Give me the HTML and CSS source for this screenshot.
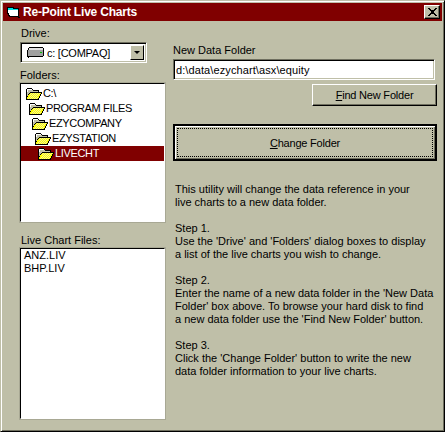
FILE: index.html
```html
<!DOCTYPE html>
<html lang="en">
<head>
    <meta charset="UTF-8">
    <meta name="viewport" content="width=device-width, initial-scale=1.0">
    <title>Re-Point Live Charts</title>
    <link rel="stylesheet" href="styles.css">
</head>
<body>
    <svg class="defs" width="0" height="0">
        <symbol id="folder" viewBox="0 0 17 14" shape-rendering="crispEdges">
            <path d="M2 1h5v1h1v1h6v2h3v2h-1v2h-1v2h-1v2H1V2h1z" fill="#000"/>
            <path d="M2 2h5v1h1v1h5v1H5v1H4v1H3v2H2z" fill="#c0c0a8"/>
            <path d="M2 2h5v1H3v2H2z" fill="#fff"/>
            <path d="M5 6h11v1h-1v2h-1v2h-1v1H2v-2h1V8h1V7h1z" fill="#ffff00"/>
            <path d="M6 6h1v1H6zM8 6h1v1H8zM10 6h1v1h-1zM12 6h1v1h-1zM14 6h1v1h-1zM5 7h1v1H5zM7 7h1v1H7zM9 7h1v1H9zM11 7h1v1h-1zM13 7h1v1h-1zM6 8h1v1H6zM8 8h1v1H8zM10 8h1v1h-1zM12 8h1v1h-1zM5 9h1v1H5zM7 9h1v1H7zM9 9h1v1H9zM11 9h1v1h-1zM4 10h1v1H4zM6 10h1v1H6zM8 10h1v1H8zM10 10h1v1h-1zM12 10h1v1h-1zM3 11h1v1H3zM5 11h1v1H5zM7 11h1v1H7zM9 11h1v1H9zM11 11h1v1h-1z" fill="#f0f0a0"/>
        </symbol>
    </svg>

    <div class="window">
        <div class="titlebar">
            <svg class="title-icon" width="13" height="13" viewBox="0 0 13 13" shape-rendering="crispEdges">
                <path d="M0 1h7v1h5v9h1v1h-2v-1H2v-1H1V8H0z" fill="#000"/>
                <path d="M1 2h5v1h5v7H3V9H2V7H1z" fill="#fff"/>
                <path d="M1 2h5v1h5v1H1z" fill="#00e0e0"/>
            </svg>
            <span class="title-text">Re-Point Live Charts</span>
            <button class="close-btn" type="button">
                <svg width="9" height="8" viewBox="0 0 9 8" shape-rendering="crispEdges">
                    <path d="M0 0h2v1h1v1h3V1h1V0h2v1H8v1H7v1H6v2h1v1h1v1h1v1H7V7H6V6H3v1H2v1H0V7h1V6h1V5h1V3H2V2H1V1H0z" fill="#000"/>
                </svg>
            </button>
        </div>

        <div class="content">
            <div class="left-col">
                <label class="drive-label">Drive:</label>
                <div class="combo">
                    <div class="combo-value">
                        <svg class="drive-icon" width="17" height="11" viewBox="0 0 17 11" shape-rendering="crispEdges">
                            <path d="M2 0h14v1h1v8h-1v1H2v1H1v-1H0V3h1V1h1z" fill="#000"/>
                            <path d="M2 1h14v2H2z" fill="#e0e0e0"/>
                            <path d="M1 3h15v6H1z" fill="#a0a0a0"/>
                            <path d="M13 5h2v1h-2z" fill="#00c000"/>
                        </svg>
                        <span class="combo-text">c: [COMPAQ]</span>
                    </div>
                    <div class="combo-arrow"><span class="arrow-down"></span></div>
                </div>

                <label class="folders-label">Folders:</label>
                <ul class="listbox folders">
                    <li class="lvl-0"><svg class="folder-icon"><use href="#folder"/></svg>C:\</li>
                    <li class="lvl-1"><svg class="folder-icon"><use href="#folder"/></svg>PROGRAM FILES</li>
                    <li class="lvl-2"><svg class="folder-icon"><use href="#folder"/></svg>EZYCOMPANY</li>
                    <li class="lvl-3"><svg class="folder-icon"><use href="#folder"/></svg>EZYSTATION</li>
                    <li class="lvl-4 selected"><svg class="folder-icon"><use href="#folder"/></svg>LIVECHT</li>
                </ul>

                <label class="files-label">Live Chart Files:</label>
                <ul class="listbox files">
                    <li>ANZ.LIV</li>
                    <li>BHP.LIV</li>
                </ul>
            </div>

            <div class="right-col">
                <label class="data-label">New Data Folder</label>
                <input class="data-input" type="text" value="d:\data\ezychart\asx\equity">
                <div class="find-row">
                    <button class="btn find-btn" type="button"><u>F</u>ind New Folder</button>
                </div>
                <button class="btn change-btn" type="button"><span class="focus-box"><span><u>C</u>hange Folder</span></span></button>

                <div class="help">
                    <p>This utility will change the data reference in your<br>live charts to a new data folder.</p>
                    <p>Step 1.<br>Use the 'Drive' and 'Folders' dialog boxes to display<br>a list of the live charts you wish to change.</p>
                    <p>Step 2.<br>Enter the name of a new data folder in the 'New Data<br>Folder' box above. To browse your hard disk to find<br>a new data folder use the 'Find New Folder' button.</p>
                    <p>Step 3.<br>Click the 'Change Folder' button to write the new<br>data folder information to your live charts.</p>
                </div>
            </div>
        </div>
    </div>
</body>
</html>
```

FILE: styles.css
```css
html, body {
    margin: 0;
    padding: 0;
}
body {
    font-family: "Liberation Sans", Arial, sans-serif;
    font-size: 11px;
    color: #000;
    background-color: #bfbfa8;
}
.defs {
    display: block;
    height: 0;
}
.window {
    box-sizing: border-box;
    width: 445px;
    height: 432px;
    padding: 2px;
    background-color: #bfbfa8;
    border-top: 1px solid #bfbfa8;
    border-left: 1px solid #bfbfa8;
    border-right: 1px solid #000;
    border-bottom: 1px solid #000;
    box-shadow: inset 1px 1px 0 #fff, inset -1px -1px 0 #6f6f5f;
    display: flex;
    flex-direction: column;
}
.titlebar {
    height: 18px;
    flex: none;
    background-color: #800000;
    color: #fff;
    display: flex;
    align-items: center;
    padding: 0 2px 0 4px;
    font-weight: bold;
    font-size: 12px;
    letter-spacing: -0.2px;
}
.title-icon {
    margin-right: 3px;
}
.title-text {
    flex: 1;
}
.close-btn {
    box-sizing: border-box;
    width: 16px;
    height: 14px;
    padding: 0;
    background-color: #bfbfa8;
    border: 1px solid;
    border-color: #fff #000 #000 #fff;
    box-shadow: inset -1px -1px 0 #6f6f5f;
    display: flex;
    align-items: center;
    justify-content: center;
}
.content {
    flex: 1;
    display: flex;
    padding-left: 17px;
}
.left-col {
    width: 145px;
    flex: none;
    display: flex;
    flex-direction: column;
}
.drive-label {
    margin-top: 5px;
    height: 16px;
    padding-left: 1px;
    line-height: 14px;
}
.combo {
    box-sizing: border-box;
    width: 127px;
    height: 21px;
    display: flex;
    background-color: #fff;
    border: 1px solid;
    border-color: #6f6f5f #fff #fff #6f6f5f;
    box-shadow: inset 1px 1px 0 #000, inset -1px -1px 0 #bfbfa8;
    padding: 2px;
}
.combo-value {
    flex: 1;
    display: flex;
    align-items: center;
    padding-left: 4px;
}
.combo-text {
    letter-spacing: -0.25px;
}
.drive-icon {
    margin-right: 3px;
}
.combo-arrow {
    box-sizing: border-box;
    width: 14px;
    background-color: #bfbfa8;
    border: 1px solid;
    border-color: #fff #000 #000 #fff;
    display: flex;
    align-items: center;
    justify-content: center;
}
.arrow-down {
    width: 0;
    height: 0;
    border-left: 3px solid transparent;
    border-right: 3px solid transparent;
    border-top: 3px solid #000;
}
.folders-label {
    margin-top: 5px;
    height: 15px;
    line-height: 14px;
}
.listbox {
    box-sizing: border-box;
    list-style: none;
    margin: 0;
    padding: 1px;
    width: 145px;
    background-color: #fff;
    border: 1px solid;
    border-color: #000 #fff #fff #000;
    box-shadow: 0 0 0 1px #a8a894;
    overflow: hidden;
}
.folders {
    height: 139px;
    padding-top: 2px;
    padding-right: 0;
    padding-left: 0;
}
.folders li {
    height: 15px;
    line-height: 15px;
    display: flex;
    align-items: center;
    white-space: nowrap;
    letter-spacing: -0.35px;
}
.folder-icon {
    width: 17px;
    height: 14px;
    flex: none;
    margin-right: 1px;
}
.lvl-0 { padding-left: 4px; }
.lvl-1 { padding-left: 7px; }
.lvl-2 { padding-left: 10px; }
.lvl-3 { padding-left: 13px; }
.lvl-4 { padding-left: 16px; }
.folders .selected {
    background-color: #800000;
    color: #fff;
}
.files-label {
    margin-top: 11px;
    height: 15px;
    line-height: 14px;
    padding-left: 1px;
}
.files {
    height: 171px;
    padding: 0 0 0 3px;
}
.files li {
    height: 13px;
    line-height: 13px;
}
.right-col {
    flex: 1;
    padding-left: 8px;
    padding-right: 6px;
    display: flex;
    flex-direction: column;
}
.data-label {
    margin-top: 22px;
    height: 16px;
    line-height: 14px;
}
.data-input {
    box-sizing: border-box;
    width: 262px;
    height: 21px;
    padding: 1px 2px 0;
    margin: 0;
    font: inherit;
    letter-spacing: 0.1px;
    background-color: #fff;
    border: 1px solid;
    border-color: #6f6f5f #fff #fff #6f6f5f;
    box-shadow: inset 1px 1px 0 #000, inset -1px -1px 0 #bfbfa8;
    outline: none;
}
.find-row {
    display: flex;
    justify-content: flex-end;
    margin-top: 4px;
}
.btn {
    font: inherit;
    color: #000;
    background-color: #bfbfa8;
    padding: 0;
    cursor: pointer;
    letter-spacing: -0.2px;
}
.find-btn {
    box-sizing: border-box;
    width: 125px;
    height: 22px;
    border: 1px solid;
    border-color: #fff #000 #000 #fff;
    box-shadow: inset -1px -1px 0 #6f6f5f;
}
.change-btn {
    box-sizing: border-box;
    width: 264px;
    height: 37px;
    margin-top: 18px;
    border: 2px solid #000;
    box-shadow: inset 1px 1px 0 #fff, inset -1px -1px 0 #6f6f5f;
    display: flex;
    padding: 2px;
}
.focus-box {
    flex: 1;
    border: 1px dotted #000;
    display: flex;
    align-items: center;
    justify-content: center;
}
.help {
    margin-top: 22px;
    padding-left: 2px;
    line-height: 13px;
    white-space: nowrap;
}
.help p {
    margin: 0 0 13px;
}
```
